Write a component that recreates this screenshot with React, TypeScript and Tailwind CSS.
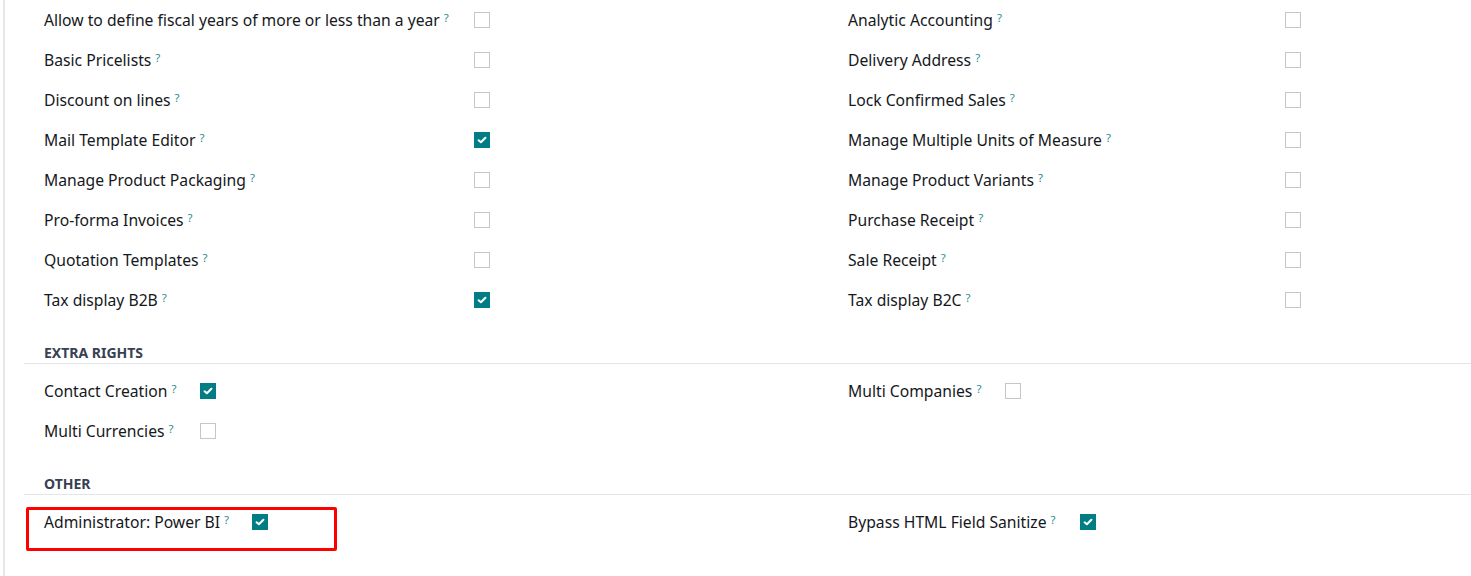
import React from 'react';

type Field = { label: string; checked?: boolean };

const Checkbox = ({ checked }: { checked?: boolean }) =>
  checked ? (
    <span className="flex h-4 w-4 items-center justify-center bg-[#017e84]">
      <svg width="10" height="8" viewBox="0 0 10 8" fill="none">
        <path d="M1.6 4.3 L3.9 6.2 L8.4 1.8" stroke="white" strokeWidth="2.1" strokeLinecap="round" strokeLinejoin="round" />
      </svg>
    </span>
  ) : (
    <span className="block h-4 w-4 border border-[#c4c6c9] bg-white" />
  );

const Row = ({ field, labelWidth, mark }: { field: Field; labelWidth: string; mark?: boolean }) => (
  <div className="relative flex h-10 items-center pl-5">
    {mark && (
      <div className="absolute left-[2px] top-[5px] h-[44px] w-[311px] rounded-[2px] border-[3px] border-[#ff0000]" />
    )}
    <div className={`${labelWidth} shrink-0`}>
      <span className="text-[15.7px] text-[#15181c]">{field.label}</span>
      <sup className="relative -top-[4px] ml-[4px] text-[11.5px] text-[#2a8c92]">?</sup>
    </div>
    <Checkbox checked={field.checked} />
  </div>
);

const Section = ({
  title,
  left,
  right,
  leftWidth,
  rightWidth,
  mark,
}: {
  title?: string;
  left: Field[];
  right: Field[];
  leftWidth: string;
  rightWidth: string;
  mark?: boolean;
}) => (
  <div>
    {title && (
      <div className="mt-6 border-b border-[#e3e5e8] pb-[1px] pl-5">
        <h3 className="text-[14px] font-bold leading-[18px] text-[#374151]">{title}</h3>
      </div>
    )}
    <div className={`grid grid-cols-[804px_1fr] ${title ? 'mt-[7px]' : ''}`}>
      <div>
        {left.map((f, i) => (
          <Row key={f.label} field={f} labelWidth={leftWidth} mark={mark && i === 0} />
        ))}
      </div>
      <div>
        {right.map((f) => (
          <Row key={f.label} field={f} labelWidth={rightWidth} />
        ))}
      </div>
    </div>
  </div>
);

export default function App() {
  return (
    <div className="h-[576px] w-full overflow-hidden bg-white font-['Noto_Sans',sans-serif]">
      <div className="flex h-full">
        <div className="ml-[3px] w-[2px] shrink-0 bg-[#e4e6ea]" />
        <div className="ml-[19px] flex-1">
          <Section
            leftWidth="w-[430px]"
            rightWidth="w-[437px]"
            left={[
              { label: 'Allow to define fiscal years of more or less than a year' },
              { label: 'Basic Pricelists' },
              { label: 'Discount on lines' },
              { label: 'Mail Template Editor', checked: true },
              { label: 'Manage Product Packaging' },
              { label: 'Pro-forma Invoices' },
              { label: 'Quotation Templates' },
              { label: 'Tax display B2B', checked: true },
            ]}
            right={[
              { label: 'Analytic Accounting' },
              { label: 'Delivery Address' },
              { label: 'Lock Confirmed Sales' },
              { label: 'Manage Multiple Units of Measure' },
              { label: 'Manage Product Variants' },
              { label: 'Purchase Receipt' },
              { label: 'Sale Receipt' },
              { label: 'Tax display B2C' },
            ]}
          />
          <Section
            title="EXTRA RIGHTS"
            leftWidth="w-[156px]"
            rightWidth="w-[157px]"
            left={[{ label: 'Contact Creation', checked: true }, { label: 'Multi Currencies' }]}
            right={[{ label: 'Multi Companies' }]}
          />
          <Section
            title="OTHER"
            mark
            leftWidth="w-[208px]"
            rightWidth="w-[232px]"
            left={[{ label: 'Administrator: Power BI', checked: true }]}
            right={[{ label: 'Bypass HTML Field Sanitize', checked: true }]}
          />
        </div>
      </div>
    </div>
  );
}
